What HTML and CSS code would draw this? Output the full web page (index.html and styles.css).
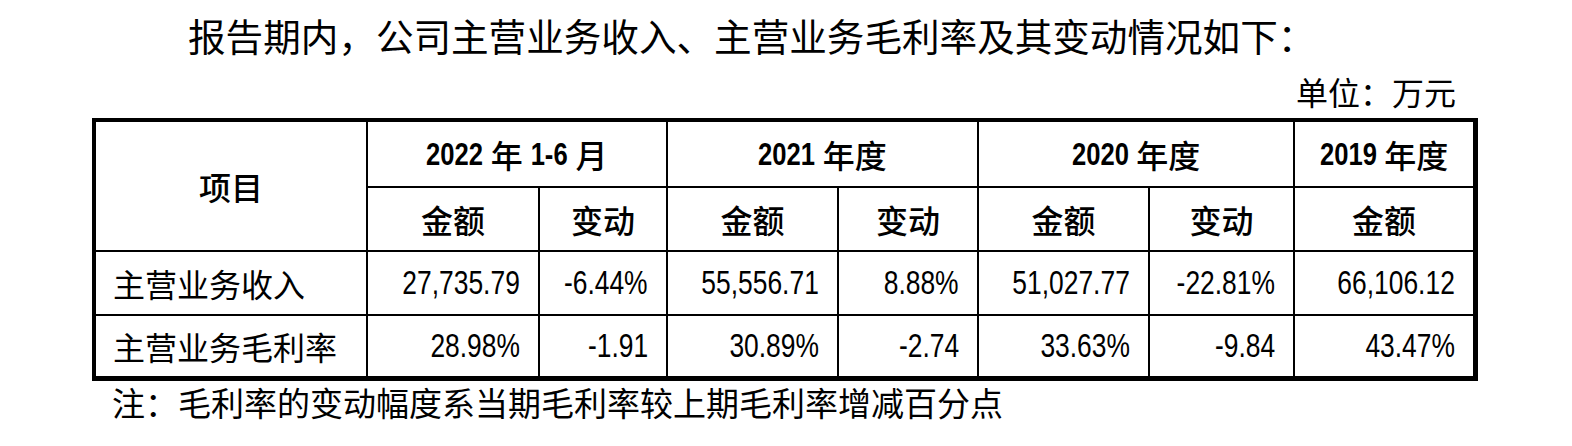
FILE: index.html
```html
<!DOCTYPE html>
<html lang="zh-CN">
<head>
<meta charset="utf-8">
<link rel="stylesheet" href="styles.css">
</head>
<body>
<div class="page">
  <p class="title">报告期内，公司主营业务收入、主营业务毛利率及其变动情况如下：</p>
  <p class="unit">单位：万元</p>
  <div class="grid">
    <div class="cell head item">项目</div>
    <div class="cell head span2"><b class="y4">2022</b> 年 <b class="y3">1-6</b> 月</div>
    <div class="cell head span2"><b class="y4">2021</b> 年度</div>
    <div class="cell head span2"><b class="y4">2020</b> 年度</div>
    <div class="cell head"><b class="y4">2019</b> 年度</div>
    <div class="cell head">金额</div>
    <div class="cell head">变动</div>
    <div class="cell head">金额</div>
    <div class="cell head">变动</div>
    <div class="cell head">金额</div>
    <div class="cell head">变动</div>
    <div class="cell head">金额</div>

    <div class="cell label">主营业务收入</div>
    <div class="cell num"><span class="n">27,735.79</span></div>
    <div class="cell num"><span class="n">-6.44%</span></div>
    <div class="cell num"><span class="n">55,556.71</span></div>
    <div class="cell num"><span class="n">8.88%</span></div>
    <div class="cell num"><span class="n">51,027.77</span></div>
    <div class="cell num"><span class="n">-22.81%</span></div>
    <div class="cell num"><span class="n">66,106.12</span></div>

    <div class="cell label">主营业务毛利率</div>
    <div class="cell num"><span class="n">28.98%</span></div>
    <div class="cell num"><span class="n">-1.91</span></div>
    <div class="cell num"><span class="n">30.89%</span></div>
    <div class="cell num"><span class="n">-2.74</span></div>
    <div class="cell num"><span class="n">33.63%</span></div>
    <div class="cell num"><span class="n">-9.84</span></div>
    <div class="cell num"><span class="n">43.47%</span></div>
  </div>
  <p class="note">注：毛利率的变动幅度系当期毛利率较上期毛利率增减百分点</p>
</div>
</body>
</html>
```
FILE: styles.css
```css
html, body {
  margin: 0;
  padding: 0;
  background: #fff;
}
.page {
  width: 1572px;
  color: #000;
  font-family: "Noto Sans CJK SC", sans-serif;
}
.title {
  margin: 0;
  padding-left: 188px;
  height: 70px;
  line-height: 70px;
  font-size: 37.6px;
}
.unit {
  margin: 0;
  height: 42px;
  line-height: 42px;
  font-size: 32px;
  text-align: right;
  padding-right: 116px;
}
.grid {
  margin: 6px 0 0 92px;
  width: 1377px;
  display: grid;
  grid-template-columns: 270px 170px 126px 169px 138px 169px 143px 178px;
  grid-template-rows: 64px 62px 62px 60px;
  gap: 2px;
  background: #000;
  border-style: solid;
  border-color: #000;
  border-width: 4px 5px 5px 4px;
}
.cell {
  background: #fff;
  display: flex;
  align-items: center;
  font-size: 32px;
}
.head {
  justify-content: center;
  font-weight: 500;
  white-space: pre;
}
.head b {
  display: inline-block;
  font-family: "Liberation Sans", Arial, sans-serif;
  font-weight: 700;
  font-size: 32px;
  transform: scaleX(0.8);
  transform-origin: center;
}
.head b.y4 {
  margin: 0 -7px;
}
.head b.y3 {
  margin: 0 -4px;
}
.item {
  grid-row: span 2;
}
.span2 {
  grid-column: span 2;
}
.label {
  padding-left: 17px;
}
.num {
  justify-content: flex-end;
  padding-right: 18px;
  font-family: "Liberation Sans", Arial, sans-serif;
}
.n {
  display: inline-block;
  font-size: 33px;
  transform: scaleX(0.8);
  transform-origin: right center;
}
.note {
  margin: 0;
  height: 42px;
  line-height: 42px;
  padding-left: 112px;
  font-size: 33px;
}
```
